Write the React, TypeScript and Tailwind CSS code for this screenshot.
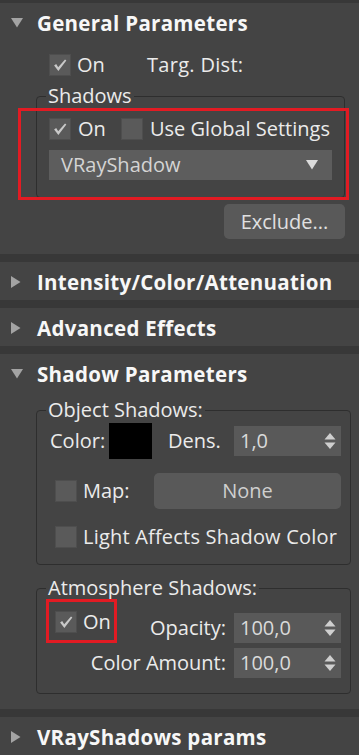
import React from "react";

const Check = () => (
  <svg width="22" height="22" viewBox="0 0 22 22" className="block">
    <path d="M4.5 11.5 L6.8 10 L9 13.5 L16.5 5 L18 6 L9.2 17.5 Z" fill="#c9c9c9" />
  </svg>
);

function CheckBox({ checked }: { checked?: boolean }) {
  return (
    <div className="w-[22px] h-[22px] bg-[#5a5a5a] border border-[#4e4e4e] flex items-center justify-center shrink-0">
      {checked ? <Check /> : null}
    </div>
  );
}

function TriDown({ color = "#a3a3a3" }: { color?: string }) {
  return (
    <svg width="12" height="10" viewBox="0 0 12 10" className="block">
      <path d="M0 0 H12 L6 9.5 Z" fill={color} />
    </svg>
  );
}

function TriRight() {
  return (
    <svg width="10" height="12" viewBox="0 0 10 12" className="block">
      <path d="M0 0 L9.5 6 L0 12 Z" fill="#a3a3a3" />
    </svg>
  );
}

function Header({ open, title }: { open?: boolean; title: string }) {
  return (
    <div className="h-[38px] flex items-center pt-[2px]">
      <div className="w-[37px] flex justify-start pl-[11px]">{open ? <TriDown /> : <TriRight />}</div>
      <span className="font-['Open_Sans',sans-serif] font-bold text-[20.5px] tracking-[0.3px] text-[#f7f7f7] leading-none whitespace-nowrap">{title}</span>
    </div>
  );
}

function Spinner({ value }: { value: string }) {
  return (
    <div className="w-[107px] h-[30px] bg-[#595959] flex items-center justify-between pl-[6px] pr-[5px] shrink-0">
      <span className="text-[#dadada]">{value}</span>
      <svg width="12" height="18" viewBox="0 0 12 18" className="block">
        <path d="M6 1 L11.5 7.5 H0.5 Z" fill="#cfcfcf" />
        <path d="M0.5 10.5 H11.5 L6 17 Z" fill="#cfcfcf" />
      </svg>
    </div>
  );
}

export default function App() {
  return (
    <div className="w-[359px] h-[755px] overflow-hidden bg-[#383838] pt-[3px] flex flex-col gap-[8px] font-['Open_Sans',sans-serif] text-[20px] leading-[22px] text-[#ebebeb]">
      {/* General Parameters */}
      <div className="relative bg-[#444444] pb-[15px] shrink-0">
        <Header open title="General Parameters" />
        <div className="pl-[36px] pr-[14px]">
          <div className="mt-[13px] flex items-center h-[22px]">
            <div className="ml-[13px]"><CheckBox checked /></div>
            <span className="ml-[6px] w-[70px]">On</span>
            <span className="tracking-[0.3px]">Targ. Dist:</span>
          </div>
          <fieldset className="mt-[9px] border border-[#2e2e2e] rounded-[4px] px-[12px] pt-[11px] pb-[17px]">
            <legend className="-ml-[3px] px-[2px]">Shadows</legend>
            <div className="flex items-center h-[22px]">
              <CheckBox checked />
              <span className="ml-[7px] w-[43px]">On</span>
              <CheckBox />
              <span className="ml-[7px] whitespace-nowrap">Use Global Settings</span>
            </div>
            <div className="mt-[10px] h-[30px] bg-[#5d5d5d] flex items-center justify-between pl-[12px] pr-[14px]">
              <span className="text-[#d4d4d4]">VRayShadow</span>
              <TriDown color="#dcdcdc" />
            </div>
          </fieldset>
          <div className="mt-[6px] flex justify-end">
            <div className="w-[121px] h-[35px] rounded-[5px] bg-[#595959] flex items-center justify-center text-[#e0e0e0]">Exclude...</div>
          </div>
        </div>
        <div className="absolute left-[18px] top-[105px] w-[331px] h-[92px] border-[3px] border-[#e21b23]" />
      </div>

      <div className="bg-[#444444] shrink-0"><Header title="Intensity/Color/Attenuation" /></div>
      <div className="bg-[#444444] shrink-0"><Header title="Advanced Effects" /></div>

      {/* Shadow Parameters */}
      <div className="relative bg-[#444444] pb-[15px] shrink-0">
        <Header open title="Shadow Parameters" />
        <div className="pl-[36px] pr-[8px]">
          <fieldset className="mt-[7px] border border-[#2e2e2e] rounded-[4px] pl-[13px] pr-[9px] pt-[2px] pb-[16px]">
            <legend className="-ml-[4px] px-[2px]">Object Shadows:</legend>
            <div className="flex items-center h-[36px]">
              <span className="w-[59px]">Color:</span>
              <div className="w-[43px] h-[36px] bg-black shrink-0" />
              <span className="ml-[16px]">Dens.</span>
              <div className="ml-auto"><Spinner value="1,0" /></div>
            </div>
            <div className="mt-[14px] flex items-center h-[36px]">
              <div className="ml-[5px]"><CheckBox /></div>
              <span className="ml-[6px]">Map:</span>
              <div className="ml-auto w-[187px] h-[36px] rounded-[5px] bg-[#595959] flex items-center justify-center text-[#cfcfcf]">None</div>
            </div>
            <div className="mt-[17px] flex items-center h-[22px]">
              <div className="ml-[5px]"><CheckBox /></div>
              <span className="ml-[6px] whitespace-nowrap tracking-[0.2px]">Light Affects Shadow Color</span>
            </div>
          </fieldset>
          <fieldset className="mt-[12px] border border-[#2e2e2e] rounded-[4px] pl-[18px] pr-[9px] pt-[12px] pb-[15px]">
            <legend className="-ml-[9px] px-[2px]">Atmosphere Shadows:</legend>
            <div className="flex items-start">
              <CheckBox checked />
              <span className="ml-[6px] h-[22px] flex items-center">On</span>
              <div className="ml-auto mt-[2px] flex items-center">
                <span>Opacity:</span>
                <div className="ml-[8px]"><Spinner value="100,0" /></div>
              </div>
            </div>
            <div className="mt-[5px] flex items-center justify-end">
              <span>Color Amount:</span>
              <div className="ml-[8px]"><Spinner value="100,0" /></div>
            </div>
          </fieldset>
        </div>
        <div className="absolute left-[46px] top-[245px] w-[71px] h-[44px] border-[3px] border-[#e21b23]" />
      </div>

      <div className="bg-[#444444] shrink-0 h-[40px]"><Header title="VRayShadows params" /></div>
    </div>
  );
}
